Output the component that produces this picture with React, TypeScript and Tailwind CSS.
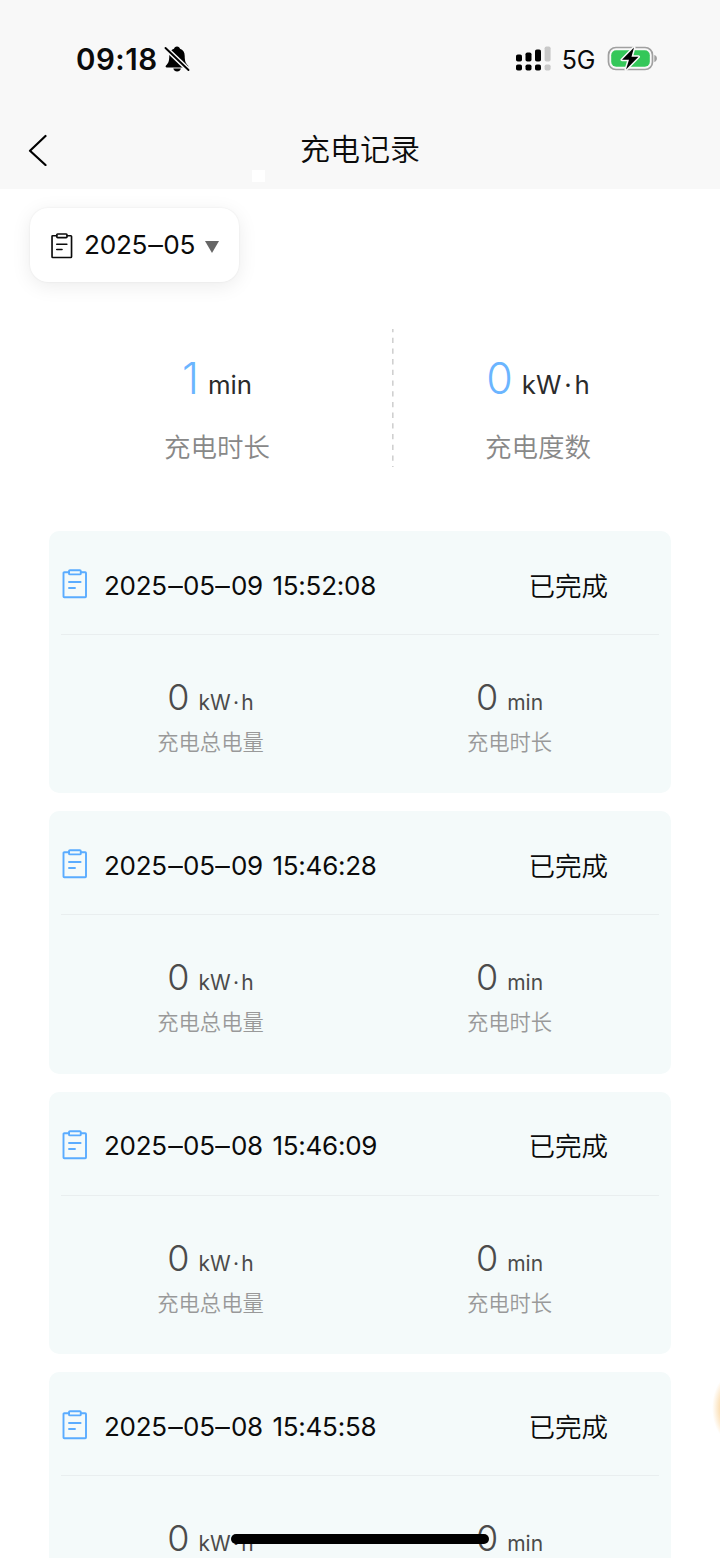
const latin = 'font-["Inter","Noto_Sans_CJK_SC",sans-serif]';
const cjk = 'font-["Noto_Sans_CJK_SC",sans-serif] font-[350]';

function Clipboard({ className }: { className: string }) {
  return (
    <svg viewBox="0 0 26 30" fill="none" stroke="currentColor" strokeWidth="1.9" strokeLinejoin="round" strokeLinecap="round" className={className}>
      <path d="M7 3.2H2.3Q1.5 3.2 1.5 4V27.5Q1.5 28.3 2.3 28.3H23.2Q24 28.3 24 27.5V4Q24 3.2 23.2 3.2H18.8" />
      <rect x="7" y="1.2" width="11.8" height="4.2" rx="1" />
      <path d="M7 13H18.6M7 19H13" />
    </svg>
  );
}

function StatusBar() {
  return (
    <div className="flex h-[117px] items-center pl-[76px] pr-[63px]">
      <span className="text-[29.500px] font-semibold leading-[36px] tracking-[0.500px]">09:18</span>
      <svg viewBox="0 0 26 28" className="ml-[6px] h-7 w-[26px] shrink-0">
        <path d="M13 1.5c1.8 0 2.7 1 3 2.3 3 1 4.700 3.600 4.700 7 0 5.700 1 7.500 3.300 9.700.8.800.4 2-.8 2H2.800c-1.200 0-1.600-1.200-.8-2 2.300-2.200 3.300-4 3.300-9.700 0-3.400 1.700-6 4.700-7 .3-1.300 1.200-2.300 3-2.300Z" fill="#000" />
        <path d="M9.300 23.500h7.600c-.5 1.900-1.900 2.900-3.800 2.900s-3.300-1-3.800-2.900Z" fill="#000" />
        <path d="M1.500 3 24.500 25" stroke="#f8f8f8" strokeWidth="5" />
        <path d="M1.500 3 24.500 25" stroke="#000" strokeWidth="1.900" strokeLinecap="round" />
      </svg>
      <svg viewBox="0 0 36 26" className="ml-auto h-[26px] w-9 shrink-0">
        <g fill="#000">
          <rect x="1" y="8.500" width="6" height="7" rx="1.800" />
          <rect x="1" y="18.500" width="6" height="6" rx="1.800" />
          <rect x="10.500" y="6.500" width="6" height="9" rx="1.800" />
          <rect x="10.500" y="18.500" width="6" height="6" rx="1.800" />
          <rect x="20" y="3.500" width="6" height="12" rx="1.800" />
          <rect x="20" y="18.500" width="6" height="6" rx="1.800" />
        </g>
        <g fill="#c8c8c8">
          <rect x="29.600" y="0.500" width="6" height="15" rx="1.800" />
          <rect x="29.600" y="18.500" width="6" height="6" rx="1.800" />
        </g>
      </svg>
      <span className="ml-[11px] mt-[3px] text-[25px] leading-[30px] tracking-[-0.300px]">5G</span>
      <svg viewBox="0 0 50 26" className="ml-3 h-[26px] w-[50px] shrink-0">
        <rect x="1.500" y="1.500" width="44" height="22" rx="7.500" fill="none" stroke="#a0a0a0" strokeWidth="1.700" />
        <path d="M47.300 9c1.800.6 2.600 1.900 2.600 3.500s-.8 2.900-2.600 3.500Z" fill="#a0a0a0" />
        <rect x="4.200" y="4.200" width="38.600" height="16.600" rx="5" fill="#34c759" />
        <path d="M27 1.500 15 13.800h7L19 23.500 31.500 10.800h-7Z" fill="#000" stroke="#f8f8f8" strokeWidth="3" strokeLinejoin="round" paintOrder="stroke" />
      </svg>
    </div>
  );
}

function Unit({ text }: { text: string }) {
  const [head, tail] = text.split('·');
  return tail ? (
    <>
      {head}
      <span className="mx-[0.110em]">·</span>
      {tail}
    </>
  ) : (
    <>{head}</>
  );
}

function DateText({ text }: { text: string }) {
  return (
    <>
      {text.split('–').map((part, i) => (
        <span key={i}>
          {i > 0 && <span className="mx-[1.700px] inline-block scale-x-[1.120]">–</span>}
          {part}
        </span>
      ))}
    </>
  );
}

function Summary({ value, unit, label }: { value: string; unit: string; label: string }) {
  return (
    <div className="flex flex-col items-center">
      <div className="flex items-baseline">
        <span className="text-[43px] font-[330] leading-[52px] text-[#6bb5ff]">{value}</span>
        <span className="ml-[9px] text-[25.800px] font-[370] leading-[52px] text-[#2b2b2b]">
          <Unit text={unit} />
        </span>
      </div>
      <div className={`mt-[17px] text-[26.500px] leading-[36px] text-[#888] ${cjk}`}>{label}</div>
    </div>
  );
}

function Metric({ value, unit, label }: { value: string; unit: string; label: string }) {
  return (
    <div className="flex flex-col items-center">
      <div className="flex items-baseline text-[#4b4b4b]">
        <span className="text-[36px] font-[350] leading-[44px]">{value}</span>
        <span className="ml-[9px] text-[21px] font-[370] leading-[44px]">
          <Unit text={unit} />
        </span>
      </div>
      <div className={`mt-px text-[21.300px] leading-[30px] text-[#999] ${cjk}`}>{label}</div>
    </div>
  );
}

function RecordCard({ time }: { time: string }) {
  return (
    <article className="h-[262.400px] shrink-0 rounded-[10px] bg-[#f4fafa] px-3">
      <div className="flex h-[104px] items-center border-b border-[#e9eeef] pr-[51px]">
        <Clipboard className="ml-px mt-[3px] h-[30px] w-[26px] shrink-0 text-[#5aacff]" />
        <span className="ml-[16px] mt-[6px] whitespace-nowrap text-[26px] font-[370] leading-[32px] tracking-[-0.250px] [word-spacing:2.500px]">
          <DateText text={time} />
        </span>
        <span className={`ml-auto mt-[4px] text-[26.500px] leading-[36px] ${cjk}`}>已完成</span>
      </div>
      <div className="grid grid-cols-2 pt-[40px]">
        <Metric value="0" unit="kW·h" label="充电总电量" />
        <Metric value="0" unit="min" label="充电时长" />
      </div>
    </article>
  );
}

const records = ['2025–05–09 15:52:08', '2025–05–09 15:46:28', '2025–05–08 15:46:09', '2025–05–08 15:45:58'];

export default function App() {
  return (
    <main className={`relative flex h-[1558px] w-[720px] flex-col overflow-hidden bg-white text-[#0b0b0b] ${latin}`}>
      <header className="relative h-[189px] shrink-0 bg-[#f8f8f8]">
        <StatusBar />
        <div className="grid h-[66px] grid-cols-[60px_1fr_60px] items-center">
          <svg viewBox="0 0 20 32" className="ml-7 h-8 w-5" fill="none" stroke="#000" strokeWidth="2.200" strokeLinecap="round" strokeLinejoin="round">
            <path d="M17.500 2 2 16.800 17.500 31" />
          </svg>
          <h1 className={`-mt-[6px] text-center text-[30px] leading-[40px] ${cjk}`}>充电记录</h1>
        </div>
        <div className="absolute left-[252px] top-[170px] h-3 w-[13px] bg-white" />
      </header>
      <button className="ml-[30px] mt-[19px] flex h-[74px] w-[209px] shrink-0 items-center rounded-[18px] bg-white pl-5 shadow-[0_4px_20px_rgba(0,0,0,0.080),0_0_2px_rgba(0,0,0,0.080)]">
        <Clipboard className="mt-px h-[26px] w-6 shrink-0" />
        <span className="ml-[10px] whitespace-nowrap text-[26.200px] font-[370] leading-8 tracking-[-0.300px]">
          <DateText text="2025–05" />
        </span>
        <svg viewBox="0 0 14 12" className="ml-[10px] mt-[3px] h-3 w-[14px] shrink-0">
          <path d="M0 0H14L7 12Z" fill="#666" />
        </svg>
      </button>
      <section className="ml-[42px] mt-[47px] grid h-[138px] shrink-0 grid-cols-[350px_292px] pt-[23px]">
        <Summary value="1" unit="min" label="充电时长" />
        <Summary value="0" unit="kW·h" label="充电度数" />
      </section>
      <svg viewBox="0 0 2 138" className="absolute left-[392px] top-[329px] h-[138px] w-[2px]">
        <path d="M.8 0V138" stroke="#d0d0d0" strokeWidth="1.600" strokeDasharray="5.300 5.400" strokeDashoffset="2" />
      </svg>
      <section className="mt-[64px] flex flex-col gap-[18px] px-[49px]">
        {records.map((time) => (
          <RecordCard key={time} time={time} />
        ))}
      </section>
      <div className="absolute left-[712px] top-[1374px] h-[68px] w-[40px] rounded-full bg-radial from-[#f9c67a] from-20% to-[#f9c67a]/0 to-70%" />
      <div className="absolute left-[231px] top-[1534px] h-[10px] w-[258px] rounded-full bg-black" />
    </main>
  );
}
